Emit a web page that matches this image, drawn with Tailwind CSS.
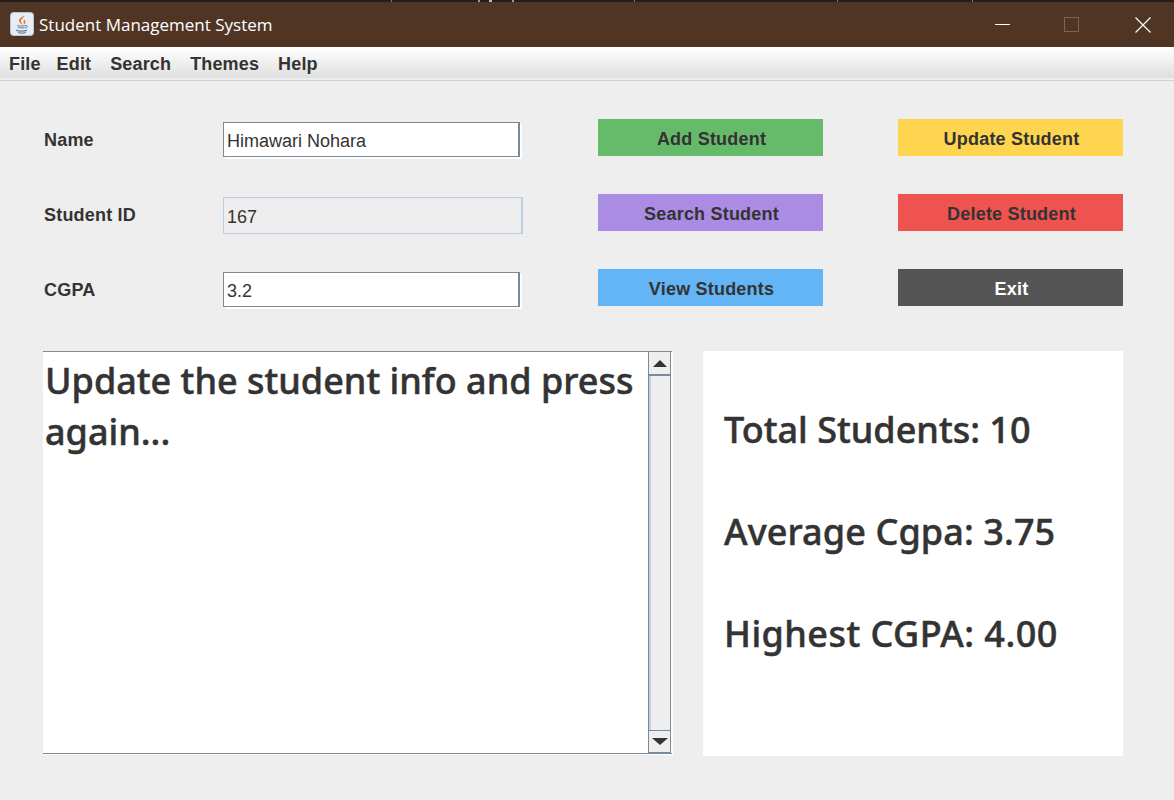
<!DOCTYPE html>
<html lang="en">
<head>
    <meta charset="UTF-8">
    <meta name="viewport" content="width=device-width, initial-scale=1.0">
    <title>Student Management System</title>
    <script src="https://cdn.jsdelivr.net/npm/@tailwindcss/browser@4"></script>
</head>
<body class="bg-[#eeeeee] h-screen w-full overflow-hidden flex flex-col font-['Liberation_Sans',sans-serif] text-[#333333]">
    <!-- strip of the window behind -->
    <div class="h-[2px] bg-[#1f1f22] flex shrink-0">
        <div class="w-[392px] border-r border-[#77777a]"></div>
        <div class="w-[243px] border-r border-[#77777a] flex">
            <span class="ml-[86px] w-[2px] bg-[#b09880]"></span>
            <span class="ml-[9px] w-[3px] bg-[#c8b8a8]"></span>
            <span class="ml-[20px] w-[2px] bg-[#b09880]"></span>
        </div>
        <div class="w-[203px] border-r border-[#77777a]"></div>
        <div class="w-[135px] border-r border-[#77777a]"></div>
    </div>

    <!-- title bar -->
    <div class="h-[45px] bg-[#503525] flex items-center shrink-0 pl-[10px]">
        <svg width="24" height="24" viewBox="0 0 24 24" class="shrink-0 -mt-[1px]">
            <rect x="0.5" y="0.5" width="23" height="23" rx="3" fill="#e6edf4" stroke="#b9c6d3"/>
            <path d="M14 3c1 2.500-3.500 4-3 6.500.2 1 1 2 1.500 3-2-.8-4.500-3-3-5.500C11 5 13.500 5 14 3z" fill="#e8762b"/>
            <path d="M15.500 7c-1.500 1-2.500 2-1.800 3.500.3.700.3 1.300-.2 2 2-.8 2.500-2.200 1.500-3.700-.4-.6-.2-1.200.5-1.800z" fill="#e8762b"/>
            <path d="M7 13.500c1.500.7 7 .7 8.500 0M8 15.500c1.500.5 5 .5 6.500 0M15.500 13.500c2.500-.5 2.500 2-.5 2.500" fill="none" stroke="#5f7f9e" stroke-width="1"/>
            <path d="M6 18c2 1.500 9 1.500 11 0M8 20.500c2 .7 6 .7 8 0" fill="none" stroke="#5f7f9e" stroke-width="1.200"/>
        </svg>
        <span class="ml-[5px] text-[17px] text-white font-['Open_Sans',sans-serif] whitespace-nowrap">Student Management System</span>
        <div class="ml-auto flex items-center">
            <div class="w-[15px] h-[1px] bg-white mr-[54px]"></div>
            <div class="w-[15px] h-[15px] border border-[#7a6558] mr-[56px]"></div>
            <svg width="16" height="16" viewBox="0 0 16 16" class="mr-[23px]">
                <path d="M0.500 0.500L15.500 15.500M15.500 0.500L0.500 15.500" stroke="#ffffff" stroke-width="1.200"/>
            </svg>
        </div>
    </div>

    <!-- menu bar -->
    <div class="h-[31px] bg-gradient-to-b from-white to-[#dfdfdf] flex items-center gap-[19px] pl-[9px] pt-[3px] text-[18px] font-bold tracking-[0.15px] shrink-0">
        <span>File</span>
        <span class="-ml-[3px]">Edit</span>
        <span>Search</span>
        <span>Themes</span>
        <span>Help</span>
    </div>
    <div class="h-[2px] bg-[#eeeeee] shrink-0"></div>
    <div class="h-[1px] bg-[#cfcfcf] shrink-0"></div>

    <main class="flex-1 pl-[44px] pt-[38px]">
        <!-- form and buttons -->
        <div class="grid grid-cols-[179px_375px_300px_225px] grid-rows-[37px_37px_37px] gap-y-[38px] text-[18px]">
            <div class="font-bold tracking-[0.2px] flex items-center pt-[6px]">Name</div>
            <div class="pt-[3px]">
                <input type="text" value="Himawari Nohara" class="w-[297px] h-[35px] bg-white border-t border-l border-b border-r-2 border-[#7a8a99] shadow-[2px_2px_0_#ffffff] pl-[3px] pt-[4px] outline-none">
            </div>
            <div><button class="w-[225px] h-[37px] pt-[3px] pl-[2px] bg-[#66bb6a] font-bold tracking-[0.2px]">Add Student</button></div>
            <div><button class="w-[225px] h-[37px] pt-[3px] pl-[2px] bg-[#ffd54f] font-bold tracking-[0.2px]">Update Student</button></div>

            <div class="font-bold tracking-[0.2px] flex items-center pt-[6px]">Student ID</div>
            <div class="pt-[3px]">
                <input type="text" value="167" disabled class="w-[300px] h-[37px] bg-[#eeeeee] border border-r-2 border-[#b8cfe5] pl-[3px] pt-[3px] text-[#333333]">
            </div>
            <div><button class="w-[225px] h-[37px] pt-[3px] pl-[2px] bg-[#ab8ce4] font-bold tracking-[0.2px]">Search Student</button></div>
            <div><button class="w-[225px] h-[37px] pt-[3px] pl-[2px] bg-[#ef5350] font-bold tracking-[0.2px]">Delete Student</button></div>

            <div class="font-bold tracking-[0.2px] flex items-center pt-[6px]">CGPA</div>
            <div class="pt-[3px]">
                <input type="text" value="3.2" class="w-[297px] h-[35px] bg-white border-t border-l border-b border-r-2 border-[#7a8a99] shadow-[2px_2px_0_#ffffff] pl-[3px] pt-[4px] outline-none">
            </div>
            <div><button class="w-[225px] h-[37px] pt-[3px] pl-[2px] bg-[#64b5f6] font-bold tracking-[0.2px]">View Students</button></div>
            <div><button class="w-[225px] h-[37px] pt-[3px] pl-[2px] bg-[#555555] text-white font-bold tracking-[0.2px]">Exit</button></div>
        </div>

        <!-- output and stats -->
        <div class="flex mt-[45px] -ml-[1px] font-['Noto_Sans',sans-serif] font-medium text-[36px] [-webkit-text-stroke:0.5px_#333333]">
            <div class="w-[629px] h-[403px] bg-white border-y border-[#7a8a99] flex shadow-[1px_1px_0_#ffffff]">
                <div class="w-[605px] pl-[2px] leading-[51px] pt-[3px]">Update the student info and press again...</div>
                <div class="w-[23px] bg-[#eeeeee] border-x border-[#7a8a99] flex flex-col border-b">
                    <div class="h-[24px] pt-[8px] flex justify-center border-b-2 border-[#7a8a99]">
                        <svg width="14" height="7" viewBox="0 0 14 7"><path d="M7 0L14 7H0z" fill="#333333"/></svg>
                    </div>
                    <div class="flex-1 border-l-2 border-[#b8cfe5]"></div>
                    <div class="h-[22px] pt-[7px] flex justify-center border-t border-[#7a8a99]">
                        <svg width="16" height="7" viewBox="0 0 16 7"><path d="M0 0H16L8 7z" fill="#333333"/></svg>
                    </div>
                </div>
            </div>
            <div class="ml-[31px] w-[420px] h-[405px] bg-white pl-[21px] pt-[53px] flex flex-col gap-[51px] leading-[51px]">
                <div>Total Students: 10</div>
                <div class="tracking-[0.1px]">Average Cgpa: 3.75</div>
                <div class="tracking-[0.45px]">Highest CGPA: 4.00</div>
            </div>
        </div>
    </main>
</body>
</html>
